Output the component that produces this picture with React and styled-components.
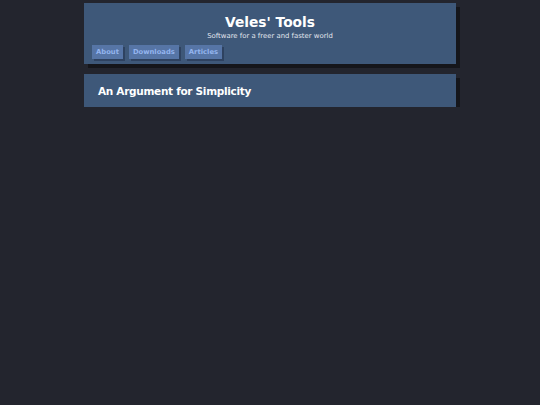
import React from "react";
import styled, { createGlobalStyle } from "styled-components";

const GlobalStyle = createGlobalStyle`
  html, body {
    margin: 0;
    padding: 0;
    background: #23252e;
    font-family: "DejaVu Sans", Verdana, sans-serif;
  }
`;

const Page = styled.div`
  width: 372px;
  margin: 0 auto;
  padding-top: 3px;
  display: flex;
  flex-direction: column;
  gap: 10px;
`;

const Panel = styled.section`
  background: #3e5879;
  box-shadow: 4px 4px 0 #15161b;
`;

const Header = styled(Panel)`
  padding: 10px 8px 5px;
  display: flex;
  flex-direction: column;
`;

const Title = styled.h1`
  margin: 0;
  text-align: center;
  color: #ffffff;
  font-size: 13.8px;
  font-weight: 700;
  line-height: 18px;
`;

const Subtitle = styled.p`
  margin: 1px 0 0;
  text-align: center;
  color: #e2e6ee;
  font-size: 6.9px;
  line-height: 9px;
`;

const Nav = styled.nav`
  display: flex;
  gap: 6px;
  margin-top: 4px;
`;

const NavButton = styled.a`
  display: block;
  padding: 0 4px;
  height: 14px;
  line-height: 14px;
  background: #5675a6;
  color: #93b4ee;
  font-size: 6.8px;
  font-weight: 700;
  box-shadow: 2px 2px 0 #2e4260;
  cursor: pointer;
`;

const Card = styled(Panel)`
  padding: 0 14px;
  height: 33px;
  display: flex;
  align-items: center;
`;

const CardTitle = styled.h2`
  margin: 0;
  color: #ffffff;
  font-size: 10.5px;
  letter-spacing: -0.3px;
  font-weight: 700;
`;

export default function App() {
  return (
    <>
      <GlobalStyle />
      <Page>
        <Header>
          <Title>Veles' Tools</Title>
          <Subtitle>Software for a freer and faster world</Subtitle>
          <Nav>
            <NavButton>About</NavButton>
            <NavButton>Downloads</NavButton>
            <NavButton>Articles</NavButton>
          </Nav>
        </Header>
        <Card>
          <CardTitle>An Argument for Simplicity</CardTitle>
        </Card>
      </Page>
    </>
  );
}
